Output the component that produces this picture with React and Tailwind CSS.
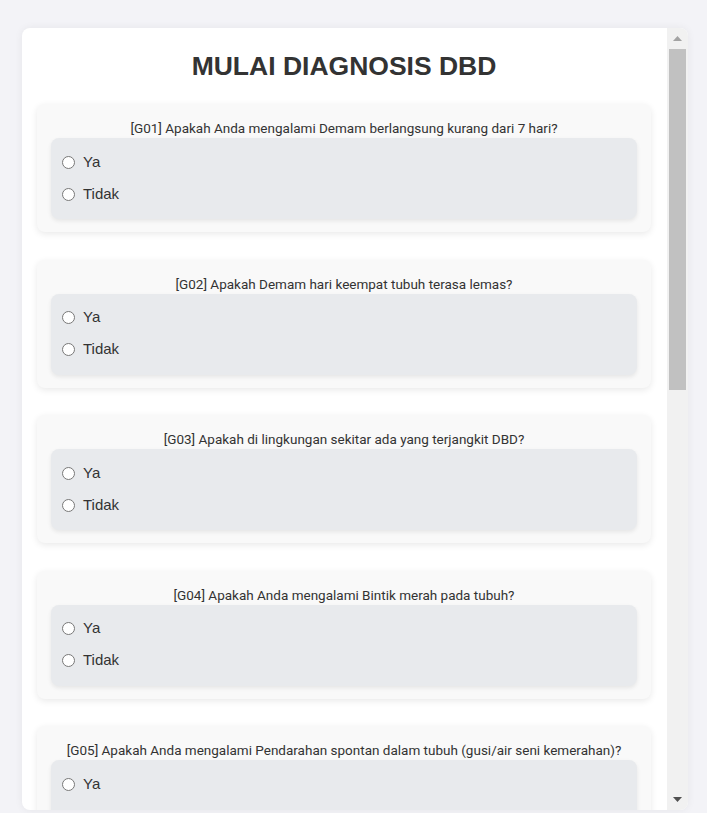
const questions = [
  "[G01] Apakah Anda mengalami Demam berlangsung kurang dari 7 hari?",
  "[G02] Apakah Demam hari keempat tubuh terasa lemas?",
  "[G03] Apakah di lingkungan sekitar ada yang terjangkit DBD?",
  "[G04] Apakah Anda mengalami Bintik merah pada tubuh?",
  "[G05] Apakah Anda mengalami Pendarahan spontan dalam tubuh (gusi/air seni kemerahan)?",
  "[G06] Apakah Anda mengalami Nyeri otot dan sendi?",
  "[G07] Apakah Anda mengalami Mual dan muntah?",
];

function Question({ id, text }) {
  return (
    <div className="bg-[#f9f9f9] rounded-lg shadow-[0_2px_7px_rgba(0,0,0,0.09)] px-[14px] pt-[15px] pb-[13px]">
      <p className="text-center text-[13.5px] leading-[18px] text-[#333] font-['Roboto',sans-serif] mb-[1px]">
        {text}
      </p>
      <div className="bg-[#e8eaed] rounded-lg shadow-[0_2px_4px_rgba(0,0,0,0.08)] px-[11px] pt-[8px] pb-[9px]">
        {["Ya", "Tidak"].map((opt) => (
          <label key={opt} className="flex items-center gap-[8px] h-[32px] text-[15px] text-[#333] font-['Liberation_Sans',Arial,sans-serif]">
            <input type="radio" name={id} className="m-0 w-[13px] h-[13px] accent-gray-500" />
            {opt}
          </label>
        ))}
      </div>
    </div>
  );
}

function Scrollbar() {
  return (
    <div className="w-[21px] shrink-0 bg-[#f1f1f1] flex flex-col items-center">
      <div className="h-[21px] w-full flex items-center justify-center">
        <svg width="9" height="5" viewBox="0 0 9 5"><path d="M0 5 L4.5 0 L9 5 Z" fill="#a3a3a3" /></svg>
      </div>
      <div className="w-[17px] h-[341px] bg-[#c1c1c1]" />
      <div className="flex-1" />
      <div className="h-[21px] w-full flex items-center justify-center">
        <svg width="9" height="5" viewBox="0 0 9 5"><path d="M0 0 L9 0 L4.5 5 Z" fill="#505050" /></svg>
      </div>
    </div>
  );
}

export default function App() {
  return (
    <div className="min-h-screen bg-[#f3f3f7] pt-[28px] pl-[22px]">
      <div className="w-[666px] h-[782px] bg-white rounded-lg shadow-[0_0_8px_rgba(0,0,0,0.06)] overflow-hidden flex">
        <div className="flex-1 overflow-hidden pl-[15px] pr-[16px]">
          <h1 className="text-center text-[26.5px] font-bold text-[#333] font-['Liberation_Sans',Arial,sans-serif] pt-[23px] pb-[22px] leading-[31px]">
            MULAI DIAGNOSIS DBD
          </h1>
          <div className="flex flex-col gap-[27.5px] pb-[30px]">
            {questions.map((q, i) => (
              <Question key={i} id={"g" + i} text={q} />
            ))}
          </div>
        </div>
        <Scrollbar />
      </div>
    </div>
  );
}
